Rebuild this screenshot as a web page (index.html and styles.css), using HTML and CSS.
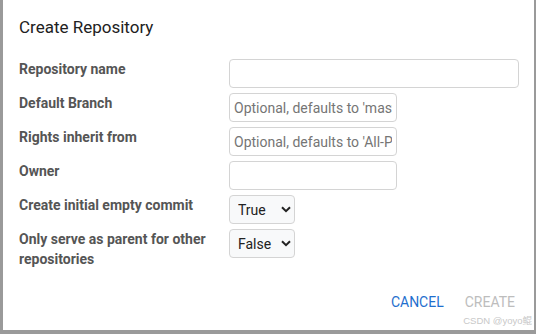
FILE: index.html
```html
<!DOCTYPE html>
<html>
<head>
    <title>Create Repository</title>
    <link rel="stylesheet" href="styles.css">
</head>
<body>
    <div class="dialog">
        <h2 class="dialog-title">Create Repository</h2>
        <form class="repo-form">
            <label class="field-label">Repository name</label>
            <div class="field"><input type="text" class="text-input wide" name="name"></div>

            <label class="field-label">Default Branch</label>
            <div class="field"><input type="text" class="text-input" name="branch" placeholder="Optional, defaults to 'master'"></div>

            <label class="field-label">Rights inherit from</label>
            <div class="field"><input type="text" class="text-input" name="parent" placeholder="Optional, defaults to 'All-Projects'"></div>

            <label class="field-label">Owner</label>
            <div class="field"><input type="text" class="text-input" name="owner"></div>

            <label class="field-label">Create initial empty commit</label>
            <div class="field">
                <span class="select-wrap">
                    <select class="select-input" name="empty_commit">
                        <option>True</option>
                        <option>False</option>
                    </select>
                    <svg class="chevron" width="10" height="7" viewBox="0 0 10 7"><path d="M1 1.2 L5 5.2 L9 1.2" fill="none" stroke="#222" stroke-width="2"/></svg>
                </span>
            </div>

            <label class="field-label">Only serve as parent for other repositories</label>
            <div class="field">
                <span class="select-wrap">
                    <select class="select-input" name="permissions_only">
                        <option>False</option>
                        <option>True</option>
                    </select>
                    <svg class="chevron" width="10" height="7" viewBox="0 0 10 7"><path d="M1 1.2 L5 5.2 L9 1.2" fill="none" stroke="#222" stroke-width="2"/></svg>
                </span>
            </div>
        </form>
        <div class="actions">
            <button type="button" class="btn btn-cancel">Cancel</button>
            <button type="button" class="btn btn-create" disabled>Create</button>
        </div>
        <div class="watermark">CSDN @yoyo鲲</div>
    </div>
</body>
</html>
```

FILE: styles.css
```css
html, body { margin: 0; padding: 0; }
body { background: #9a9a9a; width: 536px; height: 334px; overflow: hidden; font-family: Roboto, "Noto Sans CJK SC", sans-serif; }
.dialog {
    position: relative;
    box-sizing: border-box;
    width: 531px; height: 330px; margin-left: 3px;
    background: #fff; padding: 15px 0 0 16px;
}
.dialog-title { margin: 0 0 20px 0; font-size: 17px; font-weight: 400; line-height: 24px; color: #212121; }
.repo-form { display: grid; grid-template-columns: 210px auto; row-gap: 5px; }
.field-label { font-size: 14px; font-weight: 700; line-height: 20px; color: #555; padding-right: 12px; }
.field { display: flex; align-items: flex-start; }
.text-input {
    box-sizing: border-box; width: 168px; height: 29px; padding: 0 4px;
    border: 1px solid #d4d4d4; border-radius: 4px;
    font-family: Roboto, sans-serif; font-size: 14px; color: #222; outline: none;
}
.text-input.wide { width: 290px; }
.text-input::placeholder { color: #757575; }
.select-wrap { position: relative; display: inline-block; }
.select-input {
    appearance: none; -webkit-appearance: none;
    box-sizing: border-box; width: 66px; height: 29px; padding: 0 0 0 8px;
    border: 1px solid #d4d4d4; border-radius: 4px; background: #f8f9fa;
    font-family: Roboto, sans-serif; font-size: 14px; color: #222;
}
.chevron { position: absolute; left: 52px; top: 11px; pointer-events: none; }
.actions { display: flex; justify-content: flex-end; gap: 5px; margin-top: 15px; padding-right: 11px; }
.btn {
    background: none; border: none; padding: 6px 8px; height: 36px;
    font-family: Roboto, sans-serif; font-size: 14px; text-transform: uppercase; cursor: pointer;
}
.btn-cancel { color: #1f6fce; }
.btn-create { color: #bdbdbd; }
.watermark { position: absolute; right: 2px; bottom: 3px; font-family: "Liberation Sans", "Noto Sans CJK SC", sans-serif; font-size: 9.5px; color: #c8c8c8; }
```
